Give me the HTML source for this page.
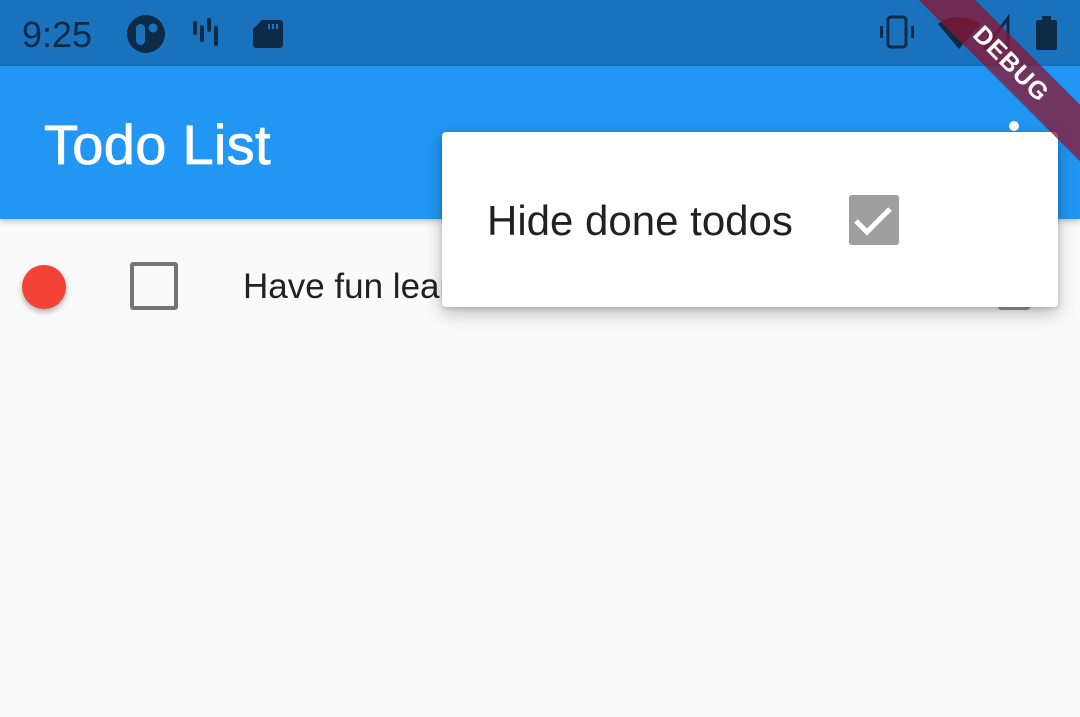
<!DOCTYPE html>
<html><head><meta charset="utf-8"><style>
*{margin:0;padding:0;box-sizing:border-box}
body{width:1080px;height:717px;overflow:hidden;background:#fafafa;font-family:"Liberation Sans",sans-serif;position:relative}
.sb{position:absolute;left:0;top:0;width:1080px;height:66px;background:#1a72bc}
.ab{position:absolute;left:0;top:66px;width:1080px;height:153px;background:#2196f3;box-shadow:0 2px 6px rgba(0,0,0,.25)}
.t{position:absolute;left:44px;top:112px;font-size:56px;color:#fff;letter-spacing:0.3px;-webkit-text-stroke:0.8px #fff}
.time{position:absolute;left:22px;top:14px;font-size:36px;color:#0d2a47}
.pop{position:absolute;left:442px;top:132px;width:616px;height:175px;background:#fff;border-radius:4px;box-shadow:0 6px 18px rgba(0,0,0,.25),0 2px 5px rgba(0,0,0,.15)}
</style></head><body>
<div class="sb"></div>
<div class="time">9:25</div>
<svg style="position:absolute;left:126px;top:14px" width="170" height="40">
<circle cx="20" cy="20" r="19" fill="#0d2a47"/>
<rect x="10" y="10" width="9" height="21" rx="4.5" fill="#1a72bc"/>
<circle cx="27" cy="14" r="4.5" fill="#1a72bc"/>
<rect x="67" y="7" width="4" height="14" rx="2" fill="#0d2a47"/>
<rect x="74" y="11" width="4" height="17" rx="2" fill="#0d2a47"/>
<rect x="81" y="4" width="4" height="14" rx="2" fill="#0d2a47"/>
<rect x="88" y="12" width="4" height="20" rx="2" fill="#0d2a47"/>
<path d="M136 6h18a3 3 0 0 1 3 3v22a3 3 0 0 1-3 3h-24a3 3 0 0 1-3-3V15z" fill="#0d2a47"/>
<rect x="142" y="10" width="2" height="5" fill="#1a72bc"/><rect x="146" y="10" width="2" height="5" fill="#1a72bc"/><rect x="150" y="10" width="2" height="5" fill="#1a72bc"/>
</svg>
<svg style="position:absolute;left:878px;top:14px" width="200" height="40">
<rect x="10" y="3" width="18" height="30" rx="3" fill="none" stroke="#0d2a47" stroke-width="3"/>
<rect x="2" y="12" width="3" height="12" fill="#0d2a47"/><rect x="33" y="12" width="3" height="12" fill="#0d2a47"/>
<path d="M60 10a35 35 0 0 1 42 0L81 35z" fill="#0d2a47"/>
<path d="M130 34V4L107 34z" fill="none" stroke="#0d2a47" stroke-width="3"/>
<rect x="158" y="6" width="21" height="30" rx="2" fill="#0d2a47"/><rect x="164" y="2" width="9" height="5" fill="#0d2a47"/>
</svg>
<div class="ab"></div>
<div class="t">Todo List</div>
<div style="position:absolute;left:1009px;top:121px;width:10px;height:10px;border-radius:50%;background:#fff"></div>
<div style="position:absolute;left:22px;top:265px;width:44px;height:44px;border-radius:50%;background:#f44336;box-shadow:0 3px 6px rgba(0,0,0,.3)"></div>
<div style="position:absolute;left:130px;top:262px;width:48px;height:48px;border:4px solid #757575;border-radius:3px"></div>
<div style="position:absolute;left:243px;top:267px;font-size:35px;color:#212121">Have fun learning Flutter</div>
<div style="position:absolute;left:998px;top:290px;width:32px;height:20px;background:#9e9e9e;border-radius:3px"></div>
<div class="pop">
<div style="position:absolute;left:45px;top:65px;font-size:42px;color:#212121">Hide done todos</div>
<svg style="position:absolute;left:407px;top:63px" width="50" height="50"><rect width="50" height="50" rx="3" fill="#9e9e9e"/><path d="M7 26l11 11 23-23" fill="none" stroke="#fff" stroke-width="5"/></svg>
</div>
<div style="position:absolute;left:851px;top:44px;width:320px;height:40px;background:rgba(140,20,50,.75);transform:rotate(45deg);transform-origin:center;color:#fff;font-weight:bold;font-size:25px;text-align:center;line-height:40px;letter-spacing:1px">DEBUG</div>
</body></html>
